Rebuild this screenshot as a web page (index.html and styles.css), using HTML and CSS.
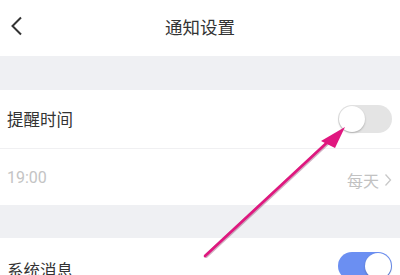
FILE: index.html
```html
<!DOCTYPE html>
<html>
<head>
<meta charset="utf-8">
<link rel="stylesheet" href="styles.css">
</head>
<body>
<div class="page">
  <header class="nav">
    <svg class="back" width="14" height="20" viewBox="0 0 14 20"><path d="M11 1.5 L2.5 10 L11 18.5" fill="none" stroke="#333" stroke-width="2"/></svg>
    <div class="title">通知设置</div>
  </header>
  <div class="gap g1"></div>
  <div class="row r1">
    <span class="label">提醒时间</span>
    <span class="switch off"><span class="knob"></span></span>
  </div>
  <div class="row r2">
    <span class="label muted">19:00</span>
    <span class="value">每天<svg class="chev" width="8" height="14" viewBox="0 0 8 14"><path d="M1.5 1.5 L6.5 7 L1.5 12.5" fill="none" stroke="#c8c8c8" stroke-width="1.3"/></svg></span>
  </div>
  <div class="gap g2"></div>
  <div class="row r3">
    <span class="label">系统消息</span>
    <span class="switch on"><span class="knob"></span></span>
  </div>
  <svg class="arrow" width="400" height="275" viewBox="0 0 400 275">
    <line x1="206" y1="256" x2="333" y2="138" stroke="#7a2050" stroke-opacity="0.35" stroke-width="4" stroke-linecap="round"/>
    <line x1="205" y1="256" x2="333" y2="137" stroke="#e0177f" stroke-width="2.6" stroke-linecap="round"/>
    <polygon points="345,127 321,141 335,148" fill="#e0177f"/>
  </svg>
</div>
</body>
</html>
```
FILE: styles.css
```css
html, body { margin: 0; padding: 0; background: #fff; }
body { font-family: "Noto Sans CJK SC", "Noto Sans", sans-serif; color: #333; }
.page { position: relative; width: 400px; height: 275px; overflow: hidden; }
.nav { height: 56px; display: flex; align-items: center; justify-content: center; position: relative; }
.back { position: absolute; left: 10px; top: 16px; }
.title { font-size: 17.5px; margin-top: -3px; }
.gap { background: #eff0f3; }
.g1 { height: 34px; }
.g2 { height: 33px; }
.row { display: flex; align-items: center; justify-content: space-between; padding: 0 8px 0 7px; }
.r1 { height: 58px; border-bottom: 1px solid #f0f0f2; }
.r2 { height: 56px; }
.r3 { height: 58px; align-items: flex-start; padding-top: 14px; box-sizing: border-box; }
.label { font-size: 16.5px; }
.muted { color: #c4c4c4; font-family: "Roboto", sans-serif; font-size: 16px; }
.value { color: #c2c2c2; font-size: 16px; display: flex; align-items: center; gap: 5px; margin-top: 5px; }
.switch { width: 54px; height: 28px; border-radius: 14px; position: relative; box-sizing: border-box; }
.switch.off { background: #e4e4e4; }
.switch.on { background: #6b8ff2; }
.knob { position: absolute; top: 1px; width: 26px; height: 26px; border-radius: 50%; background: #fff; box-shadow: 0 1px 2px rgba(0,0,0,0.25); }
.off .knob { left: 1px; }
.on .knob { right: 1px; }
.r3 .label { margin-top: 6px; }
.arrow { position: absolute; left: 0; top: 0; }
```
